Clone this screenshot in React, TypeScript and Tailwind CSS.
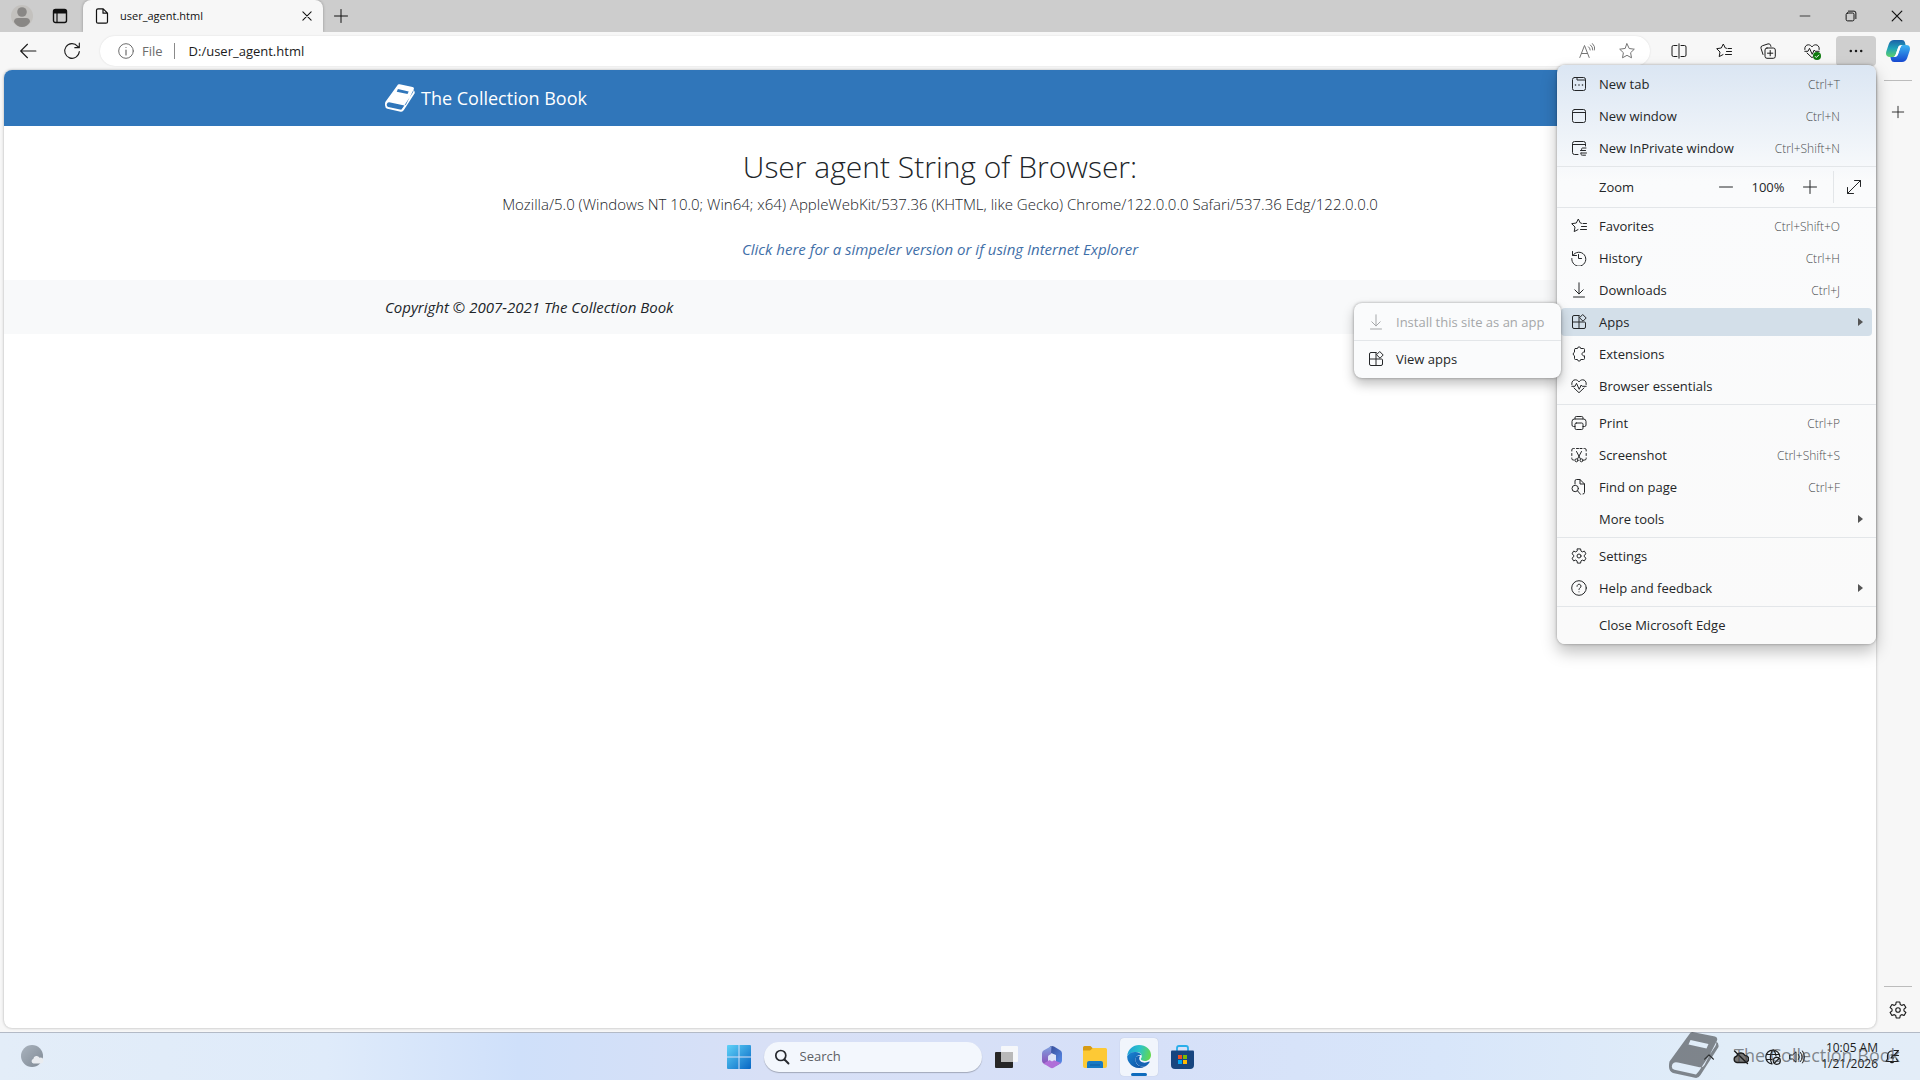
import type { ReactNode } from 'react'

interface IconProps {
  size?: number
  className?: string
  children: ReactNode
}

/* 16-unit outline icon */
function Icon({ size = 16, className = '', children }: IconProps) {
  return (
    <svg
      width={size}
      height={size}
      viewBox="0 0 16 16"
      fill="none"
      stroke="currentColor"
      strokeWidth="1"
      strokeLinecap="round"
      strokeLinejoin="round"
      className={`shrink-0 ${className}`}
      aria-hidden="true"
    >
      {children}
    </svg>
  )
}

const icons = {
  newTab: (
    <>
      <rect x="1.5" y="1.5" width="13" height="13" rx="2" />
      <path d="M6 1.5V4h8.500" />
      <path d="M4.500 9h.01M8 9h.01M11.500 9h.01" strokeWidth="1.6" />
    </>
  ),
  newWindow: (
    <>
      <rect x="1.5" y="1.5" width="13" height="13" rx="2" />
      <path d="M1.5 4.500h13" />
    </>
  ),
  inPrivate: (
    <>
      <path d="M14.500 6V3.500a2 2 0 0 0-2-2h-9a2 2 0 0 0-2 2v9a2 2 0 0 0 2 2H7M1.500 4.500h13" />
      <path d="M15 8h-3.500a1.300 1.300 0 0 0 0 2.500H14M9.500 10.500h5M10 13h5.500M10 13a1.500 1.500 0 0 0 1.500 2.200h3" />
    </>
  ),
  favorites: (
    <path d="M10.500 5.300 9.300 5 7.300 1 5.300 5l-4.600.7L4 9l-.8 4.600 3.800-2M12 5.500h3.500M10.500 8.500h5M9.500 11.500h6" />
  ),
  history: (
    <>
      <path d="M1.800 5.500a7 7 0 1 1-1 3" />
      <path d="M1.500 1.500v4h4M7.500 4.500v4h3" />
    </>
  ),
  download: <path d="M8 .8v11M3.800 7.800 8 12l4.200-4.200M2.500 15h11" />,
  apps: (
    <>
      <path d="M8 1.500H3A1.500 1.500 0 0 0 1.500 3v10A1.500 1.500 0 0 0 3 14.500h10a1.500 1.500 0 0 0 1.500-1.500V9a1 1 0 0 0-1-1h-12M8 1.500v13" />
      <path d="m12 .8 3.200 3.200L12 7.200 8.800 4z" />
    </>
  ),
  extensions: (
    <path d="M4.500 2.500h2a1.600 1.600 0 0 1 3.200 0h2.800a1 1 0 0 1 1 1v2.700a1.900 1.900 0 1 0 0 3.600v2.700a1 1 0 0 1-1 1H9.700a1.600 1.600 0 0 1-3.200 0h-2a1 1 0 0 1-1-1V9.800a1.900 1.900 0 0 1 0-3.600V3.500a1 1 0 0 1 1-1Z" />
  ),
  essentials: (
    <>
      <path d="M.8 6.500C.4 3.500 2.300 1.800 4.300 1.800 6 1.800 7.300 2.800 8 4c.7-1.200 2-2.200 3.700-2.200 2 0 3.900 1.700 3.500 4.700M3 10l5 4.700 5-4.700" />
      <path d="M.8 8.300H4l1.500-3 2.700 6 2-4.300 1 1.300h4" />
    </>
  ),
  print: (
    <>
      <path d="M4 4V2.800a1.300 1.300 0 0 1 1.300-1.300h5.400A1.300 1.300 0 0 1 12 2.800V4M4 11.500H2.500A1.500 1.500 0 0 1 1 10V6.500A2.500 2.500 0 0 1 3.500 4h9A2.500 2.500 0 0 1 15 6.500V10a1.500 1.500 0 0 1-1.500 1.500H12" />
      <rect x="4" y="8" width="8" height="6.500" rx="1.300" />
    </>
  ),
  screenshot: (
    <>
      <path d="M.8 4V3a1.500 1.500 0 0 1 1.500-1.500h1M5.500 1.500h2M9 1.500h2M13 1.500h.7A1.500 1.500 0 0 1 15.200 3v1M15.200 6.500v2M15.200 11v.5a1.500 1.500 0 0 1-1.500 1.500H13M.8 6.500v2M.8 11v.5A1.500 1.500 0 0 0 2.300 13H3" />
      <path d="m5.500 4.500 4 7.500M10.500 4.500l-4 7.500" />
      <circle cx="5.500" cy="13.300" r="1.500" />
      <circle cx="10.500" cy="13.300" r="1.500" />
    </>
  ),
  find: (
    <>
      <path d="M4 5V2A1.500 1.500 0 0 1 5.500.5H9L13.500 5v8.500a1.500 1.500 0 0 1-1.500 1.500M9 .5V5h4.500" />
      <circle cx="4.200" cy="9.500" r="3.200" />
      <path d="m6.500 11.800 3 3.500" />
    </>
  ),
  settings: (
    <>
      <path d="M6.400.9h3.200l.4 2.200 1.300.8 2.100-.8L15 5.800l-1.700 1.400v1.600L15 10.200l-1.600 2.700-2.100-.8-1.300.8-.4 2.200H6.400L6 12.900l-1.300-.8-2.100.8L1 10.200l1.700-1.400V7.200L1 5.800l1.600-2.700 2.100.8L6 3.100z" />
      <circle cx="8" cy="8" r="2" />
    </>
  ),
  help: (
    <>
      <circle cx="8" cy="8" r="7.300" />
      <path d="M6 6.300a2 2 0 1 1 3.200 1.500C8.500 8.300 8 8.700 8 9.600M8 11.800h.01" />
    </>
  ),
  plus: <path d="M8 1.500v13M1.500 8h13" />,
  minus: <path d="M1.500 8h13" />,
  close: <path d="m2.500 2.500 11 11M13.500 2.500l-11 11" strokeWidth="1.400" />,
  expand: <path d="m1.500 14.500 13-13M8.500 1.500h6v6M1.500 8.500v6h6" />,
}

type IconName = keyof typeof icons

interface MenuRowProps {
  label: string
  icon?: IconName
  shortcut?: string
  submenu?: boolean
  active?: boolean
  disabled?: boolean
}

function MenuRow({ label, icon, shortcut, submenu, active, disabled }: MenuRowProps) {
  return (
    <button
      type="button"
      role="menuitem"
      disabled={disabled}
      className={`my-0.5 flex h-7 items-center rounded pl-2.5 text-left text-[13px] ${
        active ? 'bg-[#d3dfe9]' : ''
      } ${disabled ? 'text-[#a5a7a9]' : 'text-[#242628]'}`}
    >
      <span className="w-7 shrink-0">{icon && <Icon>{icons[icon]}</Icon>}</span>
      <span className="flex-1 pt-0.5 whitespace-nowrap">{label}</span>
      {shortcut && <span className="pt-0.5 pr-8 text-[12px] font-light text-[#4c4e50]">{shortcut}</span>}
      {submenu && (
        <svg width="5" height="8" viewBox="0 0 5 8" className="mr-[9px]" aria-hidden="true">
          <path d="M0 0v8l5-4z" fill="#555" />
        </svg>
      )}
    </button>
  )
}

function Separator() {
  return <div role="separator" className="my-0.5 h-px bg-[#e3e6e9]" />
}

function EdgeMenu() {
  return (
    <div
      role="menu"
      className="absolute top-[65px] right-11 flex w-[319px] flex-col rounded-lg bg-linear-to-b from-[#dbe6f3] via-[#fafbfc] via-[20%] to-[#fafafa] py-[3px] shadow-[0_8px_16px_rgba(0,0,0,0.25),0_0_3px_rgba(0,0,0,0.35)]"
    >
      <div className="flex flex-col px-1">
        <MenuRow label="New tab" icon="newTab" shortcut="Ctrl+T" />
        <MenuRow label="New window" icon="newWindow" shortcut="Ctrl+N" />
        <MenuRow label="New InPrivate window" icon="inPrivate" shortcut="Ctrl+Shift+N" />
      </div>
      <Separator />
      <div className="flex h-9 items-center pr-3.5 pl-[42px] text-[13px] text-[#242628]">
        <span className="flex-1 pt-0.5">Zoom</span>
        <button type="button" aria-label="Zoom out" className="flex w-8 justify-center">
          <Icon>{icons.minus}</Icon>
        </button>
        <span className="w-[52px] pt-0.5 text-center">100%</span>
        <button type="button" aria-label="Zoom in" className="flex w-8 justify-center">
          <Icon>{icons.plus}</Icon>
        </button>
        <span className="mr-3 ml-[7px] h-8 w-px bg-[#e3e6e9]" />
        <button type="button" aria-label="Full screen">
          <Icon>{icons.expand}</Icon>
        </button>
      </div>
      <Separator />
      <div className="flex flex-col px-1">
        <MenuRow label="Favorites" icon="favorites" shortcut="Ctrl+Shift+O" />
        <MenuRow label="History" icon="history" shortcut="Ctrl+H" />
        <MenuRow label="Downloads" icon="download" shortcut="Ctrl+J" />
        <MenuRow label="Apps" icon="apps" submenu active />
        <MenuRow label="Extensions" icon="extensions" />
        <MenuRow label="Browser essentials" icon="essentials" />
      </div>
      <Separator />
      <div className="flex flex-col px-1">
        <MenuRow label="Print" icon="print" shortcut="Ctrl+P" />
        <MenuRow label="Screenshot" icon="screenshot" shortcut="Ctrl+Shift+S" />
        <MenuRow label="Find on page" icon="find" shortcut="Ctrl+F" />
        <MenuRow label="More tools" submenu />
      </div>
      <Separator />
      <div className="flex flex-col px-1">
        <MenuRow label="Settings" icon="settings" />
        <MenuRow label="Help and feedback" icon="help" submenu />
      </div>
      <Separator />
      <div className="flex flex-col px-1">
        <MenuRow label="Close Microsoft Edge" />
      </div>

      <div
        role="menu"
        className="absolute top-[238px] right-[315px] flex w-[207px] flex-col rounded-lg bg-[#fafbfc] py-[3px] shadow-[0_6px_12px_rgba(0,0,0,0.25),0_0_3px_rgba(0,0,0,0.35)]"
      >
        <div className="flex flex-col px-1">
          <MenuRow label="Install this site as an app" icon="download" disabled />
        </div>
        <Separator />
        <div className="flex flex-col px-1">
          <MenuRow label="View apps" icon="apps" />
        </div>
      </div>
    </div>
  )
}

function BookLogo({ className }: { className: string }) {
  return (
    <svg viewBox="0 0 50 46" className={`shrink-0 ${className}`} aria-hidden="true">
      <path
        fill="currentColor"
        fillRule="evenodd"
        d="M20.500 2q1.200-2.500 4-1.800L46 4.500q3 .8 2 4L35.500 33q-1.500 3-5 2.200L9 30.500q-4-1-5.500 1.500-2 4.500 2 5.800L27 42.500l3-3.500 16.500-25q1-2 .8-4.500 2.700 1.500 2.200 5.500L31.500 43q-2 3.500-5.500 2.800L4 41Q-1.500 39 .5 29.500ZM21.500 8l-2 4.500 18 4 2-4.500Z"
      />
    </svg>
  )
}

function TabStrip() {
  return (
    <div className="flex h-8 items-stretch bg-[#cdcdcd] text-[#111]">
      <button type="button" aria-label="Profile" className="ml-2.5 flex w-6 items-center justify-center">
        <svg width="22" height="22" viewBox="0 0 22 22" aria-hidden="true">
          <circle cx="11" cy="11" r="11" fill="#c3c1be" />
          <circle cx="11" cy="7" r="4.800" fill="#898785" />
          <path d="M3 17q0-4 4-4h8q4 0 4 4-3 5-8 5t-8-5" fill="#898785" />
        </svg>
      </button>
      <button type="button" aria-label="Tab actions" className="ml-3.5 flex w-6 items-center justify-center">
        <Icon>
          <rect x="1.500" y="1.500" width="13" height="13" rx="2" strokeWidth="1.400" />
          <path d="M2 2h12v3H2z" fill="currentColor" />
          <path d="M5 5v9" strokeWidth="1.200" />
        </Icon>
      </button>
      <div className="ml-[11px] flex w-60 items-center rounded-t-lg bg-[#f7f7f7] pr-2.5 pl-[11px] shadow-[0_0_3px_rgba(0,0,0,0.3)]">
        <Icon>
          <path d="M4 .8h5.200l4.300 4.400v8.500a1.500 1.500 0 0 1-1.500 1.500H4a1.500 1.500 0 0 1-1.500-1.500V2.300A1.500 1.500 0 0 1 4 .8ZM9 .8v4.400h4.500" strokeWidth="1.200" />
        </Icon>
        <span className="ml-2.5 flex-1 text-[11px]">user_agent.html</span>
        <button type="button" aria-label="Close tab">
          <Icon size={12}>{icons.close}</Icon>
        </button>
      </div>
      <button type="button" aria-label="New tab" className="ml-2.5 flex items-center">
        <Icon>{icons.plus}</Icon>
      </button>
      <div className="ml-auto flex">
        <button type="button" aria-label="Minimize" className="flex w-[46px] items-center justify-center">
          <Icon size={12}>{icons.minus}</Icon>
        </button>
        <button type="button" aria-label="Restore" className="flex w-[46px] items-center justify-center">
          <Icon size={12}>
            <rect x="1.500" y="4" width="10.500" height="10.500" rx="2" strokeWidth="1.300" />
            <path d="M4.500 1.500H12A2.500 2.500 0 0 1 14.500 4v7.500" strokeWidth="1.300" />
          </Icon>
        </button>
        <button type="button" aria-label="Close" className="flex w-[46px] items-center justify-center">
          <Icon size={14}>{icons.close}</Icon>
        </button>
      </div>
    </div>
  )
}

function CopilotLogo() {
  return (
    <svg width="24" height="24" viewBox="0 0 24 24" aria-hidden="true">
      <defs>
        <linearGradient id="cp1" x1="0" y1="0" x2="0" y2="1">
          <stop offset="0" stopColor="#1b62a8" />
          <stop offset=".5" stopColor="#1fa3b8" />
          <stop offset="1" stopColor="#5fd06a" />
        </linearGradient>
        <linearGradient id="cp2" x1="0" y1="0" x2="0" y2="1">
          <stop offset="0" stopColor="#3ab4f2" />
          <stop offset="1" stopColor="#1648d0" />
        </linearGradient>
      </defs>
      <path d="M8 1h8q2.300 0 2.900 2.300L19.600 6H16q-3 0-4 3l-2.500 7q-.7 2-2.500 2H4q-5 0-3.700-5.500L2.800 5Q4.300 1 8 1Z" fill="url(#cp1)" />
      <path d="M16 23H8q-2.300 0-2.900-2.300L4.400 18H8q3 0 4-3l2.500-7q.7-2 2.500-2h3q5 0 3.700 5.500L21.200 19q-1.500 4-5.200 4Z" fill="url(#cp2)" />
      <path d="M13.800 6.500h2.400q-1.300.6-1.900 2.200L12 15.500q-.8 2.200-2.700 2.200H7.800q1.300-.6 1.900-2.200L12 8.700q.6-2.200 1.800-2.200Z" fill="#fff" />
    </svg>
  )
}

function Toolbar() {
  return (
    <div className="flex h-[38px] items-start bg-[#f7f7f7] pt-1 text-[#1b1b1b]">
      <button type="button" aria-label="Back" className="ml-3 flex h-[30px] w-8 items-center justify-center">
        <Icon size={18}>
          <path d="M15 8H1.500M7.500 2l-6 6 6 6" />
        </Icon>
      </button>
      <button type="button" aria-label="Refresh" className="ml-3 flex h-[30px] w-8 items-center justify-center">
        <Icon size={18}>
          <path d="M14.500 8.500A6.500 6.500 0 1 1 13 3.800L14.500 5M14.500 1v4h-4" />
        </Icon>
      </button>
      <div className="ml-3 flex h-[30px] flex-1 items-center rounded-full bg-white pr-[15px] pl-[18px] shadow-[0_0_2px_rgba(0,0,0,0.12)]">
        <Icon className="text-[#6c6c6c]">
          <circle cx="8" cy="8" r="7.300" />
          <path d="M8 7v5M8 4.500h.01" strokeWidth="1.200" />
        </Icon>
        <label htmlFor="address" className="ml-2 pt-0.5 text-[13px] text-[#6c6c6c]">
          File
        </label>
        <span className="mr-3.5 ml-[11px] h-4 w-px bg-[#8a8a8a]" />
        <input
          id="address"
          type="text"
          defaultValue="D:/user_agent.html"
          className="min-w-0 flex-1 bg-transparent pt-0.5 text-[13px] outline-none"
        />
        <button type="button" aria-label="Read aloud" className="text-[#757575]">
          <Icon>
            <path d="m.8 14.500 4.700-12 4.700 12M2.400 10.500h6.200M9.500 3.800q1.500 1 1.700 3.200M11.500 2q2.300 1.700 2.300 5M13.500.6Q16.200 3 15.800 7" />
          </Icon>
        </button>
        <button type="button" aria-label="Add to favorites" className="ml-6 text-[#757575]">
          <Icon>
            <path d="m8 .8 2.200 4.700 5.100.7-3.700 3.500.9 5.100L8 12.300l-4.500 2.500.9-5.100L.7 6.200l5.100-.7z" />
          </Icon>
        </button>
      </div>
      <div className="ml-[7px] flex h-[30px] items-center">
        <button type="button" aria-label="Split screen" className="flex w-11 justify-center">
          <Icon>
            <path d="M6 2.500H2.500A1.500 1.500 0 0 0 1 4v8a1.500 1.500 0 0 0 1.500 1.500H6M10 2.500h3.500A1.500 1.500 0 0 1 15 4v8a1.500 1.500 0 0 1-1.500 1.500H10M8 .8v14.400" />
          </Icon>
        </button>
        <button type="button" aria-label="Favorites" className="flex w-[45px] justify-center">
          <Icon>{icons.favorites}</Icon>
        </button>
        <button type="button" aria-label="Collections" className="flex w-11 justify-center">
          <Icon>
            <rect x="5" y="5" width="10.300" height="10.300" rx="2" />
            <path d="M10.200 7.500v5.300M7.500 10.200h5.300M3 11.500 1 5.300A2 2 0 0 1 2.300 2.800L8 .9a2 2 0 0 1 2.500 1.300l.4 1.200" />
          </Icon>
        </button>
        <button type="button" aria-label="Browser essentials" className="relative flex w-11 justify-center">
          <Icon>{icons.essentials}</Icon>
          <svg width="8" height="8" viewBox="0 0 8 8" className="absolute right-[13px] bottom-[-1px]" aria-hidden="true">
            <circle cx="4" cy="4" r="4" fill="#0f7b0f" />
            <path d="m2 4.200 1.300 1.300L6 2.800" stroke="#fff" fill="none" />
          </svg>
        </button>
        <button type="button" aria-label="Settings and more" className="ml-0.5 flex h-[30px] w-10 items-center justify-center rounded bg-[#cfcfcf]">
          <Icon>
            <path d="M2.800 8h.01M8 8h.01M13.200 8h.01" strokeWidth="2.500" />
          </Icon>
        </button>
        <button type="button" aria-label="Copilot" className="flex w-11 justify-center">
          <CopilotLogo />
        </button>
      </div>
    </div>
  )
}

function SitePage() {
  return (
    <main className="min-w-0 flex-1 overflow-hidden rounded-lg bg-white text-[#212529] shadow-[0_0_3px_rgba(0,0,0,0.3)]">
      <header className="flex h-14 items-center bg-[#3076ba]">
        <a href="#" className="mx-auto flex w-full max-w-[1110px] items-center gap-1.5 text-[18px] text-white">
          <BookLogo className="h-7 w-[30px]" />
          The Collection Book
        </a>
      </header>
      <div className="pt-[22px] text-center">
        <h1 className="text-[30px] leading-[38px] font-light">User agent String of Browser:</h1>
        <p className="mt-1.5 text-[15px] leading-6 font-light">
          Mozilla/5.0 (Windows NT 10.0; Win64; x64) AppleWebKit/537.36 (KHTML, like Gecko) Chrome/122.0.0.0 Safari/537.36 Edg/122.0.0.0
        </p>
        <p className="mt-[21px] pb-[19px] text-[15px] leading-6 italic">
          <a href="#" className="text-[#3f6fa8]">
            Click here for a simpeler version or if using Internet Explorer
          </a>
        </p>
      </div>
      <footer className="flex h-[54px] items-center bg-[#f8f9fa]">
        <p className="mx-auto w-full max-w-[1110px] text-[15px] italic">Copyright © 2007-2021 The Collection Book</p>
      </footer>
    </main>
  )
}

function SideBar() {
  return (
    <aside className="flex w-11 flex-col items-center text-[#1b1b1b]">
      <div className="mt-2.5 h-px w-7 bg-[#bcbcbc]" />
      <button type="button" aria-label="Customize" className="mt-6">
        <Icon size={14}>{icons.plus}</Icon>
      </button>
      <div className="mt-auto h-px w-7 bg-[#bcbcbc]" />
      <button type="button" aria-label="Sidebar settings" className="mt-3.5 mb-[9px]">
        <Icon size={18}>{icons.settings}</Icon>
      </button>
    </aside>
  )
}

function EdgeLogo() {
  return (
    <svg width="24" height="24" viewBox="0 0 24 24" aria-hidden="true">
      <defs>
        <linearGradient id="eg1" x1="0" y1=".3" x2="1" y2=".5">
          <stop offset="0" stopColor="#1d9fd8" />
          <stop offset=".5" stopColor="#2cc3c9" />
          <stop offset="1" stopColor="#63d84f" />
        </linearGradient>
        <linearGradient id="eg2" x1="0" y1="0" x2="1" y2="1">
          <stop offset="0" stopColor="#1a86d4" />
          <stop offset="1" stopColor="#0c4a9c" />
        </linearGradient>
      </defs>
      <path d="M.2 11C1 4 6 0 12 0c7 0 12 4.500 12 10 0 3.800-2.700 6-6 6-2.500 0-4.200-.8-4.200-1.900 0-.8 1-1.100 1-2.900C14.800 8.500 12 7 9 7 4.500 7 1.500 9 .2 11Z" fill="url(#eg1)" />
      <path d="M.1 11.500C1.300 8.500 4.500 6.700 8.500 6.900c3 .2 5.300 1.600 6 3.300-.7-.5-4.800-.9-5.900 3-1 4.300 2.500 9.300 9.400 8.300A12 12 0 0 1 .1 11.500Z" fill="url(#eg2)" />
      <path d="M8.500 13.500c-.8 4.500 3.500 9 9.500 8 2.500-1.200 4-3 4.700-4.400.2-.4-.2-.7-.6-.5-5 2.500-9.700.4-9.900-3-.1-1.200.5-2.200 1.200-2.800-2.400-.4-4.500.5-4.900 2.700Z" fill="#1563b4" />
    </svg>
  )
}

function Taskbar() {
  return (
    <footer className="relative grid h-12 grid-cols-[1fr_auto_1fr] items-center border-t border-[#b3bac6] bg-[linear-gradient(90deg,#e3edf8_0%,#dfebfa_17%,#cfe0fa_27%,#d8e0f6_40%,#d6e0f8_60%,#d8e6fa_75%,#e1edf8_90%,#e3edf8_100%)]">
      <button type="button" aria-label="Weather" className="ml-5 w-6">
        <svg width="24" height="24" viewBox="0 0 24 24" aria-hidden="true">
          <defs>
            <linearGradient id="moon" x1="0" y1="0" x2="1" y2="1">
              <stop offset="0" stopColor="#a9b3be" />
              <stop offset="1" stopColor="#808a95" />
            </linearGradient>
          </defs>
          <circle cx="12" cy="11" r="11" fill="url(#moon)" />
          <path d="M13.500 18.500a2.300 2.300 0 0 1-.2-4.500 3.300 3.300 0 0 1 6.200-1.300 3 3 0 1 1 1.500 5.800z" fill="#e9ecf0" />
        </svg>
      </button>

      <div className="flex items-center">
        <button type="button" aria-label="Start">
          <svg width="24" height="24" viewBox="0 0 24 24" aria-hidden="true">
            <defs>
              <linearGradient id="win" x1="0" y1="0" x2="24" y2="24" gradientUnits="userSpaceOnUse">
                <stop offset="0" stopColor="#5fd2f8" />
                <stop offset="1" stopColor="#0766c4" />
              </linearGradient>
            </defs>
            <path d="M1 0h10.500v11.500H0V1q0-1 1-1ZM12.500 0H23q1 0 1 1v10.500H12.500ZM0 12.500h11.500V24H1q-1 0-1-1ZM12.500 12.500H24V23q0 1-1 1H12.500Z" fill="url(#win)" />
          </svg>
        </button>
        <label className="ml-[13px] flex h-[30px] w-[218px] items-center rounded-full bg-[#f3f7fd] pl-2.5 shadow-[0_1px_1px_rgba(0,0,0,0.25)]">
          <Icon className="text-[#26292e]">
            <circle cx="6.800" cy="6.500" r="5" strokeWidth="1.700" />
            <path d="m10.500 10.500 4 4" strokeWidth="1.900" />
          </Icon>
          <input
            type="text"
            aria-label="Search"
            placeholder="Search"
            className="ml-2.5 w-40 bg-transparent text-[13px] outline-none placeholder:text-[#5d6065]"
          />
        </label>
        <button type="button" aria-label="Task view" className="ml-[13px]">
          <svg width="24" height="24" viewBox="0 0 24 24" aria-hidden="true">
            <rect x="0" y="7" width="18" height="16" rx="1" fill="#262626" />
            <rect x="6" y="1" width="17" height="16" rx="1" fill="#fafafa" fillOpacity=".85" />
            <path d="M6 7h12v10H6z" fill="#b9b9b9" />
          </svg>
        </button>
        <button type="button" aria-label="Microsoft 365" className="ml-[22px]">
          <svg width="22" height="24" viewBox="0 0 22 24" aria-hidden="true">
            <defs>
              <linearGradient id="m1" x1="0" y1="0" x2="1" y2="1">
                <stop offset="0" stopColor="#34468f" />
                <stop offset="1" stopColor="#5a8ff0" />
              </linearGradient>
              <linearGradient id="m2" x1="0" y1="0" x2="0" y2="1">
                <stop offset="0" stopColor="#7fa4e0" />
                <stop offset="1" stopColor="#8a4fb8" />
              </linearGradient>
            </defs>
            <path d="M9 1.500q2-1.200 4 0l6.500 4Q21 6.500 21 8.500v7q0 2-1.500 3L15 21V10L7 7z" fill="url(#m1)" />
            <path d="M10.500 1 10 9.500l-3 2v6l-3 2L2 18q-1-1-1-2.500v-7q0-2 1.500-3z" fill="url(#m2)" />
            <path d="m2.500 18.500 8-4.500 4.500 2 5 2-7 4.600q-2 1.200-4 0z" fill="#b06fd8" />
            <path d="m11 8.500 3.500 2v4L11 16.500l-3.500-2v-4z" fill="#dce3f7" />
          </svg>
        </button>
        <button type="button" aria-label="File Explorer" className="ml-5">
          <svg width="24" height="22" viewBox="0 0 24 22" aria-hidden="true">
            <path d="M0 1.500Q0 0 1.500 0h6L10 2.500 8 5H0z" fill="#d79b14" />
            <path d="M0 4.500h7L10 2h12.500Q24 2 24 3.500V20q0 2-2 2H2q-2 0-2-2z" fill="#fdc935" />
            <path d="M4 22v-5q0-2 2-2h12q2 0 2 2v5z" fill="#1779c4" />
            <path d="M7 18.500h10v1H7z" fill="#0e5ba0" />
          </svg>
        </button>
        <button type="button" aria-label="Microsoft Edge" className="relative ml-[13px] flex h-[38px] w-[38px] items-center justify-center rounded bg-[#f1f5fc] shadow-[0_0_1px_rgba(0,0,0,0.2)]">
          <EdgeLogo />
          <span className="absolute bottom-0 h-[3px] w-4 rounded-full bg-[#0f6cbd]" />
        </button>
        <button type="button" aria-label="Microsoft Store" className="ml-[13px]">
          <svg width="23" height="24" viewBox="0 0 23 24" aria-hidden="true">
            <path d="M6 6V3q0-2 2-2h7q2 0 2 2v3" fill="none" stroke="#2aaeea" strokeWidth="1.800" />
            <path d="M0 6.500Q0 5.500 1 5.500h21q1 0 1 1V20q0 4-4 4H4q-4 0-4-4z" fill="#17457f" />
            <path d="M7 10h4v4H7z" fill="#f25022" />
            <path d="M12 10h4v4h-4z" fill="#7fba00" />
            <path d="M7 15h4v4H7z" fill="#00a4ef" />
            <path d="M12 15h4v4h-4z" fill="#ffb900" />
          </svg>
        </button>
      </div>

      <div className="flex items-center justify-end pr-5 text-[#1c1c1c]">
        <button type="button" aria-label="Show hidden icons" className="mr-[17px]">
          <Icon size={14}>
            <path d="m3 10.500 5-5 5 5" strokeWidth="1.400" />
          </Icon>
        </button>
        <Icon className="mr-4">
          <path d="M4 13.500a3.200 3.200 0 0 1-.3-6.300A4.500 4.500 0 0 1 12 6.500a3.500 3.500 0 0 1 .3 7z" fill="#777" strokeWidth="1.400" />
          <path d="m1.500 2 13 12.500" strokeWidth="1.400" />
        </Icon>
        <Icon className="mr-2">
          <path d="M7 15a7 7 0 1 1 7.800-7.500M1.500 5.500h13M1.500 10.500H7M7.500 1Q3.500 8 7 15M8.500 1q2.300 2.500 2.500 6" strokeWidth="1.200" />
          <circle cx="11.800" cy="11.800" r="3.500" strokeWidth="1.200" />
          <path d="m9.500 14 4.500-4.500" strokeWidth="1.200" />
        </Icon>
        <Icon className="mr-4">
          <path d="M1 6h2.500L7 2.800v10.400L3.500 10H1zM9.500 5.500q1.800 2.500 0 5M11.500 3.500q3.300 4.500 0 9M13.500 2q4 6 0 12" />
        </Icon>
        <div className="pb-px text-right text-[12px] leading-4">
          <div>10:05 AM</div>
          <div>1/21/2026</div>
        </div>
        <Icon className="ml-1.5">
          <path d="M8 2a4.500 4.500 0 0 0-4.500 4.500V10L2 12.500h12L12.500 10M6.300 12.500a1.800 1.800 0 0 0 3.400 0M10 1.500h4.500L10 6.500h4.500M7 6h2.500L7 9h2.500" strokeWidth="1.200" />
        </Icon>
      </div>

      {/* watermark over the tray */}
      <div className="pointer-events-none absolute right-5 bottom-0.5 flex items-center gap-[15px] text-[18px] text-[#3c4043]/60">
        <BookLogo className="h-[46px] w-[50px]" />
        <span>The Collection Book</span>
      </div>
    </footer>
  )
}

export default function App() {
  return (
    <div className="relative flex min-h-screen flex-col overflow-hidden bg-[#f7f7f7] font-['Open_Sans','Noto_Sans',sans-serif]">
      <TabStrip />
      <Toolbar />
      <div className="flex flex-1 pb-1 pl-1">
        <SitePage />
        <SideBar />
      </div>
      <Taskbar />
      <EdgeMenu />
    </div>
  )
}
